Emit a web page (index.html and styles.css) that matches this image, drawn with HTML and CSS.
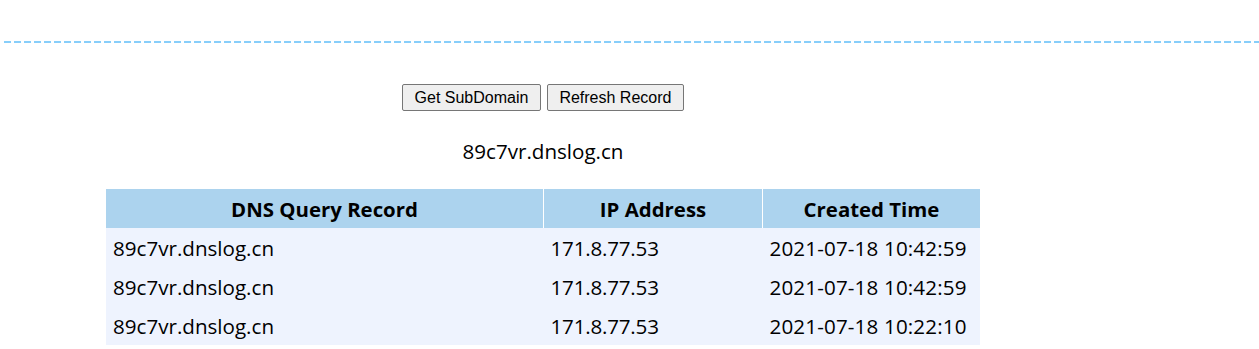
FILE: index.html
```html
<!DOCTYPE html>
<html>
<head>
<meta charset="utf-8">
<link rel="stylesheet" href="styles.css">
</head>
<body>
<div class="divider"></div>
<div class="main">
  <div class="actions">
    <button class="btn">Get SubDomain</button>
    <button class="btn">Refresh Record</button>
  </div>
  <div class="domain">89c7vr.dnslog.cn</div>
  <table class="records">
    <thead>
      <tr><th class="c1">DNS Query Record</th><th class="c2">IP Address</th><th class="c3">Created Time</th></tr>
    </thead>
    <tbody>
      <tr><td>89c7vr.dnslog.cn</td><td>171.8.77.53</td><td>2021-07-18 10:42:59</td></tr>
      <tr><td>89c7vr.dnslog.cn</td><td>171.8.77.53</td><td>2021-07-18 10:42:59</td></tr>
      <tr><td>89c7vr.dnslog.cn</td><td>171.8.77.53</td><td>2021-07-18 10:22:10</td></tr>
    </tbody>
  </table>
</div>
</body>
</html>
```
FILE: styles.css
```css
html, body {
  margin: 0;
  padding: 0;
  background: #ffffff;
}
body {
  font-family: "Open Sans", "Noto Sans", sans-serif;
  color: #000;
}
.divider {
  margin: 41px 0 0 4px;
  height: 2px;
  background: repeating-linear-gradient(to right, #87cefa 0 7px, transparent 7px 10px);
}
.main {
  width: 874px;
  margin-left: 106px;
  display: flex;
  flex-direction: column;
  align-items: center;
}
.actions {
  display: flex;
  gap: 6px;
  margin-top: 41px;
}
.btn {
  font-family: "Liberation Sans", Arial, sans-serif;
  font-size: 16px;
  height: 27px;
  padding: 1px 11.5px 0;
  background: #efefef;
  border: 1px solid #767676;
  border-radius: 2px;
  color: #000;
}
.domain {
  margin-top: 27px;
  font-size: 20.6px;
  line-height: 26px;
  height: 26px;
}
.records {
  margin-top: 25px;
  width: 874px;
  border-collapse: collapse;
  background: #eef3fe;
  font-size: 20.6px;
}
.records th {
  background: #acd3ee;
  font-weight: bold;
  height: 39px;
  padding: 0;
  border-left: 1px solid #ffffff;
  text-align: center;
  font-size: 20.4px;
}
.records th:first-child {
  border-left: none;
}
.records td {
  height: 39px;
  padding: 0 0 0 7px;
  text-align: left;
}
.records td:nth-child(2) {
  letter-spacing: -0.2px;
}
.records td:nth-child(3) {
  letter-spacing: 0.15px;
}
.c1 { width: 437px; }
.c2 { width: 218px; }
.c3 { width: 217px; }
```
